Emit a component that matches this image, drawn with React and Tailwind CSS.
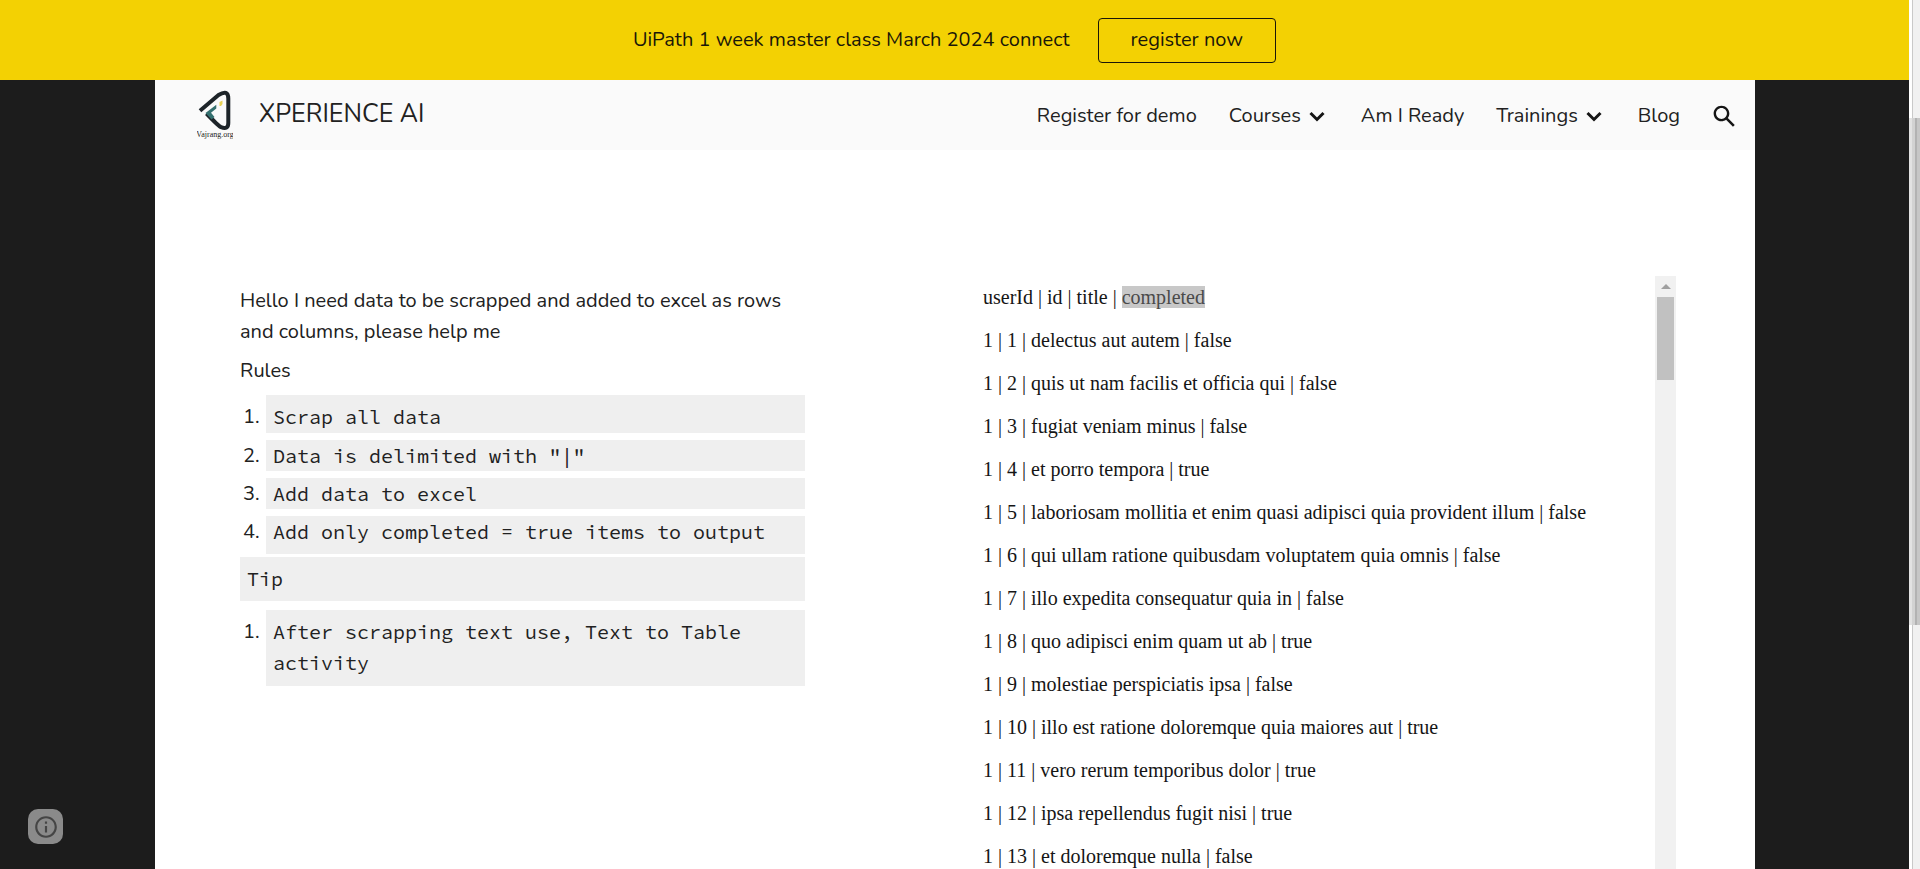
const navLinks = [
  { label: 'Register for demo' },
  { label: 'Courses', menu: true },
  { label: 'Am I Ready' },
  { label: 'Trainings', menu: true },
  { label: 'Blog' },
];

const rows = [
  '1 | 1 | delectus aut autem | false',
  '1 | 2 | quis ut nam facilis et officia qui | false',
  '1 | 3 | fugiat veniam minus | false',
  '1 | 4 | et porro tempora | true',
  '1 | 5 | laboriosam mollitia et enim quasi adipisci quia provident illum | false',
  '1 | 6 | qui ullam ratione quibusdam voluptatem quia omnis | false',
  '1 | 7 | illo expedita consequatur quia in | false',
  '1 | 8 | quo adipisci enim quam ut ab | true',
  '1 | 9 | molestiae perspiciatis ipsa | false',
  '1 | 10 | illo est ratione doloremque quia maiores aut | true',
  '1 | 11 | vero rerum temporibus dolor | true',
  '1 | 12 | ipsa repellendus fugit nisi | true',
  '1 | 13 | et doloremque nulla | false',
];

function Logo() {
  return (
    <svg className="h-[50px] w-9 shrink-0" viewBox="0 0 36 50" role="img" aria-label="Vajrang.org">
      <path
        d="M3 20.700 L21.500 5 Q31.300 -1 31.300 8.500 L31.300 33 Q31.300 40 24 37.200 Q22 36.500 9.500 23.500"
        fill="none"
        stroke="#1d2429"
        strokeWidth="4"
        strokeLinejoin="round"
      />
      <path d="M8.500 23 L19.300 14.800 V18.500 L14 22.800 L17.500 27 L14.500 29.500 Z" fill="#34706f" />
      <path d="M22.500 12 L25.500 10.500 V14 L24 16 H22.500 Z" fill="#e8d257" />
      <text x="18" y="47" textAnchor="middle" fontFamily="Liberation Serif, serif" fontSize="8" fill="#222">
        Vajrang.org
      </text>
    </svg>
  );
}

function Chevron() {
  return (
    <svg className="h-6 w-6" viewBox="0 0 24 24" fill="none" stroke="#151515" strokeWidth="3" aria-hidden="true">
      <path d="M5.500 9 L12 15.500 L18.500 9" />
    </svg>
  );
}

function Banner() {
  return (
    <div className="flex h-20 shrink-0 items-center justify-center gap-7 bg-[#f3d103] text-[#1a1708]">
      <p>UiPath 1 week master class March 2024 connect</p>
      <a href="#register" className="flex h-[45px] items-center rounded border border-[#1a1708] px-8">
        register now
      </a>
    </div>
  );
}

function Header() {
  return (
    <header className="flex h-[70px] shrink-0 items-center justify-between bg-[#fafafa] pl-[42px] pr-4">
      <a href="#home" className="flex items-center gap-[26px]">
        <Logo />
        <span className="text-[25px]">XPERIENCE AI</span>
      </a>
      <nav className="flex items-center gap-8 pt-0.5">
        {navLinks.map((link) => (
          <a key={link.label} href="#nav" className="flex items-center gap-1">
            {link.label}
            {link.menu && <Chevron />}
          </a>
        ))}
        <button type="button" aria-label="Search" className="-ml-0.5">
          <svg className="h-[29px] w-[29px]" viewBox="0 0 24 24" fill="#151515" aria-hidden="true">
            <path d="M20.490 19l-5.730-5.730C15.530 12.200 16 10.910 16 9.500 16 5.910 13.090 3 9.500 3S3 5.910 3 9.500 5.910 16 9.500 16c1.410 0 2.700-.470 3.770-1.240L19 20.490 20.490 19zM5 9.500C5 7.010 7.010 5 9.500 5S14 7.010 14 9.500 11.990 14 9.500 14 5 11.990 5 9.500z" />
          </svg>
        </button>
      </nav>
    </header>
  );
}

const codeFont = "font-['Source_Code_Pro','Noto_Sans_Mono',monospace]";

function Item({ n, pad, children }) {
  return (
    <li className="flex">
      <span className={`w-[26px] shrink-0 pl-[3px] ${pad}`}>{n}.</span>
      <span className={`flex-1 bg-[#efefef] pl-[7px] pr-10 ${codeFont} ${pad}`}>{children}</span>
    </li>
  );
}

function Instructions() {
  return (
    <section className="w-[565px] pt-[9px] leading-[31px]">
      <p>Hello I need data to be scrapped and added to excel as rows and columns, please help me</p>
      <p className="mt-2">Rules</p>
      <ol className="mt-[9px] flex flex-col gap-[7px]">
        <Item n={1} pad="pt-[6px] pb-px">Scrap all data</Item>
        <Item n={2} pad="">Data is delimited with "|"</Item>
        <Item n={3} pad="">Add data to excel</Item>
        <Item n={4} pad="pb-[7px]">Add only completed = true items to output</Item>
      </ol>
      <p className={`mt-[3px] bg-[#efefef] px-[7px] pt-[6px] pb-[7px] ${codeFont}`}>Tip</p>
      <ol className="mt-[9px]">
        <Item n={1} pad="pt-[6px] pb-2">After scrapping text use, Text to Table activity</Item>
      </ol>
    </section>
  );
}

function DataPanel() {
  return (
    <section className="flex min-h-0 w-[701px] self-stretch">
      <div className="flex flex-1 flex-col gap-5 overflow-hidden pl-2 pt-[10px] font-['Liberation_Serif',serif] leading-[23px] text-[#151515]">
        <p>
          userId | id | title | <mark className="bg-[#c8c8c8] text-[#4a4a4a]">completed</mark>
        </p>
        {rows.map((row) => (
          <p key={row}>{row}</p>
        ))}
      </div>
      <div className="flex w-[21px] flex-col items-center bg-[#f1f1f1]">
        <div className="flex h-[21px] items-center">
          <svg className="h-[5px] w-[10px]" viewBox="0 0 10 5" fill="#a0a0a0" aria-hidden="true">
            <path d="M5 0 L10 5 H0 Z" />
          </svg>
        </div>
        <div className="h-[83px] w-[17px] bg-[#c1c1c1]" />
      </div>
    </section>
  );
}

function PageScrollbar() {
  return (
    <div className="flex w-[11px] shrink-0 flex-col border-l-[3px] border-white bg-[#f1f1f1]">
      <div className="h-[118px] border-l border-[#c9c9c9]" />
      <div className="-ml-[3px] flex h-[507px]">
        <div className="w-[3px] bg-[#e2e2e2]" />
        <div className="w-[3px] bg-[#d2d2d2]" />
        <div className="w-[2px] bg-[#b2b2b2]" />
        <div className="w-[3px] bg-[#c6c6c6]" />
      </div>
      <div className="flex-1 border-l border-[#c9c9c9]" />
    </div>
  );
}

export default function App() {
  return (
    <div className="relative flex h-screen overflow-hidden bg-[#1c1c1c] font-['Nunito','Open_Sans',sans-serif] text-[20px] text-[#212121]">
      <div className="flex min-w-0 flex-1 flex-col">
        <Banner />
        <div className="ml-[155px] mr-[154px] flex min-h-0 flex-1 flex-col bg-white">
          <Header />
          <main className="flex min-h-0 flex-1 items-start justify-between pl-[85px] pr-[79px] pt-[126px]">
            <Instructions />
            <DataPanel />
          </main>
        </div>
      </div>
      <PageScrollbar />
      <button
        type="button"
        aria-label="Site information"
        className="absolute bottom-[25px] left-7 flex h-[35px] w-[35px] items-center justify-center rounded-[10px] bg-[#8a8a8a]"
      >
        <svg className="h-[26px] w-[26px]" viewBox="0 0 24 24" fill="#454545" aria-hidden="true">
          <path d="M11 17h2v-6h-2v6zm1-15C6.480 2 2 6.480 2 12s4.480 10 10 10 10-4.480 10-10S17.520 2 12 2zm0 18c-4.410 0-8-3.590-8-8s3.590-8 8-8 8 3.590 8 8-3.590 8-8 8zM11 9h2V7h-2v2z" />
        </svg>
      </button>
    </div>
  );
}
